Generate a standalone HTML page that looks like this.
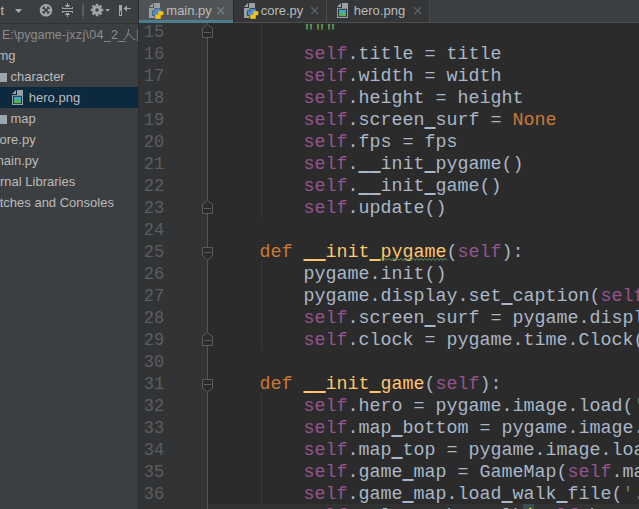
<!DOCTYPE html>
<html><head><meta charset="utf-8">
<style>
html,body{margin:0;padding:0;}
body{width:639px;height:509px;overflow:hidden;position:relative;background:#2b2b2b;font-family:"Liberation Sans",sans-serif;}
.abs{position:absolute;}
#left{left:0;top:0;width:138px;height:509px;background:#3c3f41;overflow:hidden;}
#ltb{left:0;top:0;width:138px;height:23px;background:#3c3f41;border-bottom:1px solid #323232;}
#divider{left:138px;top:0;width:1px;height:509px;background:#2b2b2b;}
.tree{position:absolute;white-space:pre;font-size:13px;color:#bbbbbb;line-height:16px;}
#tabs{left:139px;top:0;width:500px;height:23px;background:#3c3f41;overflow:hidden;}
.tab{position:absolute;top:0;height:22px;}
.tabtxt{position:absolute;font-size:13px;color:#bbbbbb;white-space:pre;line-height:16px;}
#gutter{left:139px;top:23px;width:68px;height:486px;background:#313335;}
#editor{left:208px;top:23px;width:431px;height:486px;background:#2b2b2b;overflow:hidden;}
#foldline{left:207px;top:23px;width:1px;height:486px;background:#555555;}
.code{position:absolute;left:7.5px;white-space:pre;font-family:"Liberation Mono",monospace;font-size:18.333px;line-height:22px;color:#a9b7c6;}
.ln{position:absolute;left:0;width:26px;transform:scaleX(0.93);transform-origin:15.1px 0;text-align:right;white-space:pre;font-family:"Liberation Mono",monospace;font-size:18.333px;line-height:22px;color:#5b5e61;}
.s{color:#94558d}.k{color:#cc7832}.f{color:#ffc66d}.g{color:#6a8759}.d{color:#629755}.u{position:relative;top:1px;text-shadow:0 1px 0 currentColor}.bm{color:#ffef28}
</style></head><body>

<div id="left" class="abs">
  <div id="ltb" class="abs"></div>
  <!-- toolbar -->
  <div class="tree" style="left:0.5px;top:3px;">t</div>
  <svg class="abs" style="left:0;top:0" width="138" height="22" shape-rendering="crispEdges">
    <defs><linearGradient id="sepg" x1="0" y1="0" x2="0" y2="1">
      <stop offset="0" stop-color="#3c3f41"/><stop offset="0.3" stop-color="#5e6163"/><stop offset="0.7" stop-color="#5e6163"/><stop offset="1" stop-color="#3c3f41"/></linearGradient></defs>
    <path d="M15 9 H22 L18.5 13 Z" fill="#a9a9a9" shape-rendering="auto"/>
    <!-- target -->
    <g shape-rendering="auto">
    <circle cx="46" cy="10.2" r="5.2" fill="none" stroke="#a4a4a4" stroke-width="2.2"/>
    <rect x="44.8" y="4.5" width="2.4" height="4" fill="#a4a4a4"/>
    <rect x="44.8" y="11.9" width="2.4" height="4" fill="#a4a4a4"/>
    <rect x="40.3" y="9" width="4" height="2.4" fill="#a4a4a4"/>
    <rect x="47.7" y="9" width="4" height="2.4" fill="#a4a4a4"/>
    </g>
    <!-- collapse -->
    <rect x="62" y="8" width="11" height="1" fill="#a4a4a4"/>
    <rect x="62" y="7" width="1" height="1" fill="#a4a4a4"/>
    <rect x="72" y="7" width="1" height="1" fill="#a4a4a4"/>
    <rect x="62" y="11" width="11" height="1" fill="#a4a4a4"/>
    <rect x="62" y="12" width="1" height="1" fill="#a4a4a4"/>
    <rect x="72" y="12" width="1" height="1" fill="#a4a4a4"/>
    <rect x="67" y="3" width="1" height="3" fill="#a4a4a4"/>
    <rect x="65" y="5" width="5" height="1" fill="#a4a4a4"/>
    <rect x="66" y="6" width="3" height="1" fill="#a4a4a4"/>
    <rect x="67" y="14" width="1" height="3" fill="#a4a4a4"/>
    <rect x="65" y="14" width="5" height="1" fill="#a4a4a4"/>
    <rect x="66" y="13" width="3" height="1" fill="#a4a4a4"/>
    <!-- separator -->
    <rect x="82" y="2" width="2" height="17" fill="url(#sepg)"/>
    <!-- gear -->
    <g fill="#a4a4a4" transform="translate(97 10)" shape-rendering="auto">
      <circle r="4.6"/>
      <rect x="-1.3" y="-6.2" width="2.6" height="12.4"/>
      <rect x="-6.2" y="-1.3" width="12.4" height="2.6"/>
      <rect x="-1.3" y="-6.2" width="2.6" height="12.4" transform="rotate(45)"/>
      <rect x="-6.2" y="-1.3" width="12.4" height="2.6" transform="rotate(45)"/>
      <circle r="1.7" fill="#3c3f41"/>
    </g>
    <path d="M105.3 9 H110 L107.6 11.8 Z" fill="#a4a4a4" shape-rendering="auto"/>
    <!-- hide -->
    <rect x="119" y="5" width="3" height="11" fill="#a4a4a4"/>
    <rect x="120" y="11" width="1" height="4" fill="#3c3f41"/>
    <rect x="124" y="8" width="7" height="1" fill="#a4a4a4"/>
    <path d="M123.5 8.5 L127 5.5 V11.5 Z" fill="#a4a4a4" shape-rendering="auto"/>
  </svg>

  <!-- tree -->
  <div class="tree" style="left:2px;top:27px;color:#8c8c8c;font-size:12.5px;">E:\pygame<span style="letter-spacing:0.3px">-jxzj\04_2_</span></div>
  <svg class="abs" style="left:120px;top:27px" width="18" height="16">
    <path d="M8.5 2 C8.5 7 7 10 3.5 13 M8.5 6 C10 9 12 11.5 15.5 13" stroke="#8c8c8c" stroke-width="1" fill="none"/>
    <path d="M17.3 2 V14" stroke="#7f8a92" stroke-width="0.8"/>
  </svg>
  <div class="tree" style="left:-5.5px;top:48px;">img</div>
  <div class="abs" style="left:-9px;top:73px;width:16px;height:9px;background:#9ea6ab;"></div>
  <div class="tree" style="left:10.5px;top:69px;">character</div>
  <div class="abs" style="left:0;top:87px;width:138px;height:21px;background:#0d293e;"></div>
  <svg class="abs" style="left:12px;top:90px" width="12" height="15">
    <path d="M0 4 L4 0 V4 Z" fill="#97a1a6"/><path d="M5 0 H11 V15 H0 V5 H5 Z" fill="#97a1a6"/>
    <rect x="1" y="5.8" width="9" height="8" fill="#2a3236"/>
    <rect x="2" y="6.8" width="7" height="6" fill="#3fa5d6"/>
    <path d="M2 12.8 V10.3 C3.5 9 5.5 8.8 9 11 V12.8 Z" fill="#5bb44a"/>
  </svg>
  <div class="tree" style="left:28.8px;top:90px;">hero.png</div>
  <div class="abs" style="left:-9px;top:115px;width:16px;height:9px;background:#9ea6ab;"></div>
  <div class="tree" style="left:10.5px;top:111px;">map</div>
  <div class="tree" style="left:-7px;top:132px;">core.py</div>
  <div class="tree" style="left:-7px;top:153px;">main.py</div>
  <div class="tree" style="left:-26px;top:174px;">External Libraries</div>
  <div class="tree" style="left:-27px;top:195px;">Scratches and Consoles</div>
</div>
<div id="divider" class="abs"></div>

<div id="tabs" class="abs">
  <div class="abs" style="left:0;top:22px;width:500px;height:1px;background:#4a4c4e"></div>
  <!-- active tab -->
  <div class="tab" style="left:0;width:94px;height:23px;background:#505457;"></div>
  <div class="abs" style="left:0;top:20px;width:94px;height:3px;background:#4c7d8c;"></div>
  <div class="abs" style="left:94px;top:0;width:1px;height:22px;background:#2b2b2b;"></div>
  <div class="tab" style="left:95px;width:92px;background:#343638;"></div>
  <div class="abs" style="left:187px;top:0;width:1px;height:22px;background:#4a4c4e;"></div>
  <div class="tab" style="left:188px;width:102px;background:#343638;"></div>
  <div class="abs" style="left:290px;top:0;width:1px;height:22px;background:#4a4c4e;"></div>
  <svg class="abs" style="left:10px;top:3px" width="16" height="17">
    <path d="M0 4 L4 0 V4 Z" fill="#97a1a6"/><path d="M5 0 H11 V15 H0 V5 H5 Z" fill="#97a1a6"/>
    <path d="M6.5 6 H11.5 V9 H9 V12 H4 V8.5 H6.5 Z" fill="none" stroke="#505457" stroke-width="2.2" stroke-linejoin="round"/>
    <path d="M9.5 8.5 H14 V12 H11.5 V15.5 H6.5 V12 H9.5 Z" fill="none" stroke="#505457" stroke-width="2.2" stroke-linejoin="round"/>
    <path d="M6.5 6 H11.5 V9 H9 V12 H4 V8.5 H6.5 Z" fill="#4a8fd6" stroke="#4a8fd6" stroke-width="0.6" stroke-linejoin="round"/>
    <path d="M9.5 8.5 H14 V12 H11.5 V15.5 H6.5 V12 H9.5 Z" fill="#f2c318" stroke="#f2c318" stroke-width="0.6" stroke-linejoin="round"/>
  </svg>
  <div class="tabtxt" style="left:27.3px;top:3px;">main.py</div>
  <svg class="abs" style="left:78px;top:7px" width="9" height="9"><path d="M0.3 0.3 L7 7 M7 0.3 L0.3 7" stroke="#7b8083" stroke-width="1.2"/></svg>
  <svg class="abs" style="left:105px;top:3px" width="16" height="17">
    <path d="M0 4 L4 0 V4 Z" fill="#97a1a6"/><path d="M5 0 H11 V15 H0 V5 H5 Z" fill="#97a1a6"/>
    <path d="M6.5 6 H11.5 V9 H9 V12 H4 V8.5 H6.5 Z" fill="none" stroke="#343638" stroke-width="2.2" stroke-linejoin="round"/>
    <path d="M9.5 8.5 H14 V12 H11.5 V15.5 H6.5 V12 H9.5 Z" fill="none" stroke="#343638" stroke-width="2.2" stroke-linejoin="round"/>
    <path d="M6.5 6 H11.5 V9 H9 V12 H4 V8.5 H6.5 Z" fill="#4a8fd6" stroke="#4a8fd6" stroke-width="0.6" stroke-linejoin="round"/>
    <path d="M9.5 8.5 H14 V12 H11.5 V15.5 H6.5 V12 H9.5 Z" fill="#f2c318" stroke="#f2c318" stroke-width="0.6" stroke-linejoin="round"/>
  </svg>
  <div class="tabtxt" style="left:121.7px;top:3px;">core.py</div>
  <svg class="abs" style="left:171.5px;top:7px" width="9" height="9"><path d="M0.3 0.3 L7 7 M7 0.3 L0.3 7" stroke="#616567" stroke-width="1.2"/></svg>
  <svg class="abs" style="left:198px;top:3px" width="12" height="15">
    <path d="M0 4 L4 0 V4 Z" fill="#97a1a6"/><path d="M5 0 H11 V15 H0 V5 H5 Z" fill="#97a1a6"/>
    <rect x="1" y="5.8" width="9" height="8" fill="#2a3236"/>
    <rect x="2" y="6.8" width="7" height="6" fill="#3fa5d6"/>
    <path d="M2 12.8 V10.3 C3.5 9 5.5 8.8 9 11 V12.8 Z" fill="#5bb44a"/>
  </svg>
  <div class="tabtxt" style="left:214.8px;top:3px;">hero.png</div>
  <svg class="abs" style="left:275px;top:7px" width="9" height="9"><path d="M0.3 0.3 L7 7 M7 0.3 L0.3 7" stroke="#616567" stroke-width="1.2"/></svg>
</div>

<div id="gutter" class="abs">
<div class="ln" style="top:-1px">15</div>
<div class="ln" style="top:21px">16</div>
<div class="ln" style="top:43px">17</div>
<div class="ln" style="top:65px">18</div>
<div class="ln" style="top:87px">19</div>
<div class="ln" style="top:109px">20</div>
<div class="ln" style="top:131px">21</div>
<div class="ln" style="top:153px">22</div>
<div class="ln" style="top:175px">23</div>
<div class="ln" style="top:197px">24</div>
<div class="ln" style="top:219px">25</div>
<div class="ln" style="top:241px">26</div>
<div class="ln" style="top:263px">27</div>
<div class="ln" style="top:285px">28</div>
<div class="ln" style="top:307px">29</div>
<div class="ln" style="top:329px">30</div>
<div class="ln" style="top:351px">31</div>
<div class="ln" style="top:373px">32</div>
<div class="ln" style="top:395px">33</div>
<div class="ln" style="top:417px">34</div>
<div class="ln" style="top:439px">35</div>
<div class="ln" style="top:461px">36</div>
<div class="ln" style="top:483px">37</div>
</div>
<div id="editor" class="abs">
<div class="abs" style="left:0;top:481px;width:431px;height:22px;background:#323232"></div>
<div class="abs" style="left:315px;top:481px;width:11px;height:22px;background:#3b514d"></div>
<div class="code" style="top:-1px">        <span class="d">"""</span></div>
<div class="code" style="top:21px">        <span class="s">self</span>.title = title</div>
<div class="code" style="top:43px">        <span class="s">self</span>.width = width</div>
<div class="code" style="top:65px">        <span class="s">self</span>.height = height</div>
<div class="code" style="top:87px">        <span class="s">self</span>.screen<span class="u">_</span>surf = <span class="k">None</span></div>
<div class="code" style="top:109px">        <span class="s">self</span>.fps = fps</div>
<div class="code" style="top:131px">        <span class="s">self</span>.<span class="u">_</span><span class="u">_</span>init<span class="u">_</span>pygame()</div>
<div class="code" style="top:153px">        <span class="s">self</span>.<span class="u">_</span><span class="u">_</span>init<span class="u">_</span>game()</div>
<div class="code" style="top:175px">        <span class="s">self</span>.update()</div>
<div class="code" style="top:197px"></div>
<div class="code" style="top:219px">    <span class="k">def</span> <span class="f"><span class="u">_</span><span class="u">_</span>init<span class="u">_</span>pygame</span>(<span class="s">self</span>):</div>
<div class="code" style="top:241px">        pygame.init()</div>
<div class="code" style="top:263px">        pygame.display.set<span class="u">_</span>caption(<span class="s">self</span>.title)</div>
<div class="code" style="top:285px">        <span class="s">self</span>.screen<span class="u">_</span>surf = pygame.display.set<span class="u">_</span>mode((<span class="s">self</span>.width))</div>
<div class="code" style="top:307px">        <span class="s">self</span>.clock = pygame.time.Clock()</div>
<div class="code" style="top:329px"></div>
<div class="code" style="top:351px">    <span class="k">def</span> <span class="f"><span class="u">_</span><span class="u">_</span>init<span class="u">_</span>game</span>(<span class="s">self</span>):</div>
<div class="code" style="top:373px">        <span class="s">self</span>.hero = pygame.image.load(<span class="g">'./img/character/hero.png'</span>)</div>
<div class="code" style="top:395px">        <span class="s">self</span>.map<span class="u">_</span>bottom = pygame.image.load(<span class="g">'./img/map/0.png'</span>)</div>
<div class="code" style="top:417px">        <span class="s">self</span>.map<span class="u">_</span>top = pygame.image.load(<span class="g">'./img/map/0<span class="u">_</span>top.png'</span>)</div>
<div class="code" style="top:439px">        <span class="s">self</span>.game<span class="u">_</span>map = GameMap(<span class="s">self</span>.map<span class="u">_</span>bottom, <span class="s">self</span>.map<span class="u">_</span>top)</div>
<div class="code" style="top:461px">        <span class="s">self</span>.game<span class="u">_</span>map.load<span class="u">_</span>walk<span class="u">_</span>file(<span class="g">'./img/map/0.map'</span>)</div>
<div class="code" style="top:483px">        <span class="s">self</span>.role = CharWalk<span class="bm">(</span><span class="s">self</span>.hero, 48, 0)</div>
</div>
<div id="foldline" class="abs"></div>
<svg class="abs" style="left:0;top:0" width="639" height="509">
<rect x="261" y="23" width="1" height="194" fill="#373737"/>
<rect x="261" y="261" width="1" height="88" fill="#373737"/>
<rect x="261" y="393" width="1" height="111" fill="#373737"/>
<path d="M202.5 37.5 V28.5 L207.5 24.5 L212.5 28.5 V37.5 Z" fill="#2b2b2b" stroke="#5a5d5f" stroke-width="1"/>
<rect x="204" y="32" width="7" height="1" fill="#5a5d5f"/>
<path d="M202.5 213.5 V204.5 L207.5 200.5 L212.5 204.5 V213.5 Z" fill="#2b2b2b" stroke="#5a5d5f" stroke-width="1"/>
<rect x="204" y="208" width="7" height="1" fill="#5a5d5f"/>
<path d="M202.5 345.5 V336.5 L207.5 332.5 L212.5 336.5 V345.5 Z" fill="#2b2b2b" stroke="#5a5d5f" stroke-width="1"/>
<rect x="204" y="340" width="7" height="1" fill="#5a5d5f"/>
<path d="M202.5 247.5 V256 L207.5 260.2 L212.5 256 V247.5 Z" fill="#2b2b2b" stroke="#5a5d5f" stroke-width="1"/>
<rect x="204" y="252" width="7" height="1" fill="#5a5d5f"/>
<path d="M202.5 379.5 V388 L207.5 392.2 L212.5 388 V379.5 Z" fill="#2b2b2b" stroke="#5a5d5f" stroke-width="1"/>
<rect x="204" y="384" width="7" height="1" fill="#5a5d5f"/>
<polyline points="381.0 258.2 383.0 260.5 385.0 258.2 387.0 260.5 389.0 258.2 391.0 260.5 393.0 258.2 395.0 260.5 397.0 258.2 399.0 260.5 401.0 258.2 403.0 260.5 405.0 258.2 407.0 260.5 409.0 258.2 411.0 260.5 413.0 258.2 415.0 260.5 417.0 258.2 419.0 260.5 421.0 258.2 423.0 260.5 425.0 258.2 427.0 260.5 429.0 258.2 431.0 260.5 433.0 258.2 435.0 260.5 437.0 258.2 439.0 260.5 441.0 258.2 443.0 260.5 445.0 258.2 447.0 260.5" fill="none" stroke="#5f925f" stroke-width="1"/>
</svg>


</body></html>
